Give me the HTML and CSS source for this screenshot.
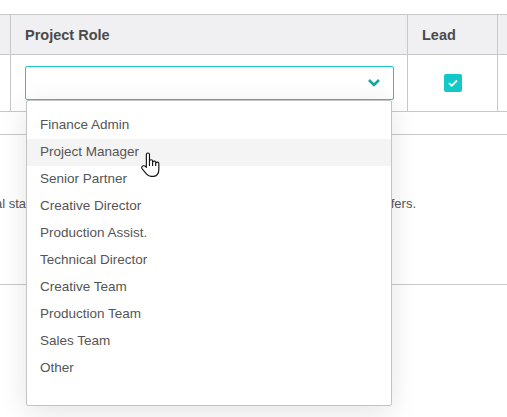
FILE: index.html
```html
<!DOCTYPE html>
<html lang="en">
<head>
    <meta charset="UTF-8">
    <meta name="viewport" content="width=device-width, initial-scale=1.0">
    <title>Project Role</title>
    <link rel="stylesheet" href="styles.css">
</head>
<body>
    <div class="page">
        <div class="team-table">
            <div class="cell head-cell edge"></div>
            <div class="cell head-cell">Project Role</div>
            <div class="cell head-cell">Lead</div>
            <div class="cell head-cell last"></div>

            <div class="cell body-cell edge"></div>
            <div class="cell body-cell role-cell">
                <div class="select-wrap">
                    <div class="select-box">
                        <svg class="select-arrow" viewBox="0 0 14 10">
                            <path d="M2 2l5 5 5-5"/>
                        </svg>
                    </div>

                    <ul class="select-menu">
                        <li class="select-option">Finance Admin</li>
                        <li class="select-option hover">Project Manager</li>
                        <li class="select-option">Senior Partner</li>
                        <li class="select-option">Creative Director</li>
                        <li class="select-option">Production Assist.</li>
                        <li class="select-option">Technical Director</li>
                        <li class="select-option">Creative Team</li>
                        <li class="select-option">Production Team</li>
                        <li class="select-option">Sales Team</li>
                        <li class="select-option">Other</li>
                    </ul>

                    <!-- mouse pointer over the hovered option -->
                    <svg class="hand-cursor" viewBox="0 0 19 25">
                        <path d="M6 13.5V2.5a1.5 1.5 0 0 1 3 0V9a1.5 1.5 0 0 1 3 0v1a1.5 1.5 0 0 1 3 .5v.5a1.5 1.5 0 0 1 3 .5V17c0 3.5-2 6.5-5 6.5h-2.5c-2 0-3.2-1-4.5-2.5L2 16.3c-.8-1-.5-2.3.5-2.8s2.1-.2 2.8.6l.7.7z"/>
                        <path d="M9 9v4.5M12 10v3.5M15 11v2.5"/>
                    </svg>
                </div>
            </div>
            <div class="cell body-cell lead-cell">
                <span class="checkbox">
                    <svg viewBox="0 0 18 18">
                        <path d="M5 9.2l2.7 2.6L13 6.5"/>
                    </svg>
                </span>
            </div>
            <div class="cell body-cell last"></div>

            <div class="cell spacer-row"></div>

            <div class="cell note-row">
                <div class="note">
                    <span class="note-start">Lead members get additional sta</span>
                    <span class="note-end">tus for all offers.</span>
                </div>
            </div>
        </div>
    </div>
</body>
</html>
```

FILE: styles.css
```css
* {
    box-sizing: border-box;
}

body {
    margin: 0;
    background-color: #fff;
    font-family: 'Liberation Sans', Arial, sans-serif;
    color: #555;
}

.page {
    width: 507px;
    height: 417px;
    overflow: hidden;
    padding-top: 14px;
}

.team-table {
    display: grid;
    grid-template-columns: 11px 397px 90px 1fr;
    border-top: 1px solid #c8c8c8;
}

.cell {
    border-right: 1px solid #c8c8c8;
    border-bottom: 1px solid #c8c8c8;
}

.cell.last {
    border-right: none;
}

.head-cell {
    height: 40px;
    padding: 0 14px;
    display: flex;
    align-items: center;
    background-color: #f0f0f2;
    font-size: 14.5px;
    font-weight: bold;
    color: #4a4a4a;
}

.head-cell.edge,
.head-cell.last {
    padding: 0;
}

.body-cell {
    height: 57px;
}

.role-cell {
    padding: 11px 0 0 14px;
}

.select-wrap {
    position: relative;
    width: 369px;
}

.select-box {
    height: 34px;
    border: 1px solid #1ccaca;
    border-radius: 2px;
    background-color: #fff;
    display: flex;
    align-items: center;
    justify-content: flex-end;
    padding-right: 12px;
}

.select-arrow {
    width: 14px;
    height: 10px;
    fill: none;
    stroke: #14a5a5;
    stroke-width: 2.6;
}

.select-menu {
    position: absolute;
    top: 34px;
    left: 1px;
    width: 366px;
    height: 306px;
    margin: 0;
    padding: 11px 0 0;
    list-style: none;
    background-color: #fff;
    border: 1px solid #c4c4c4;
    border-radius: 2px;
    box-shadow: 0 6px 28px rgba(0,0,0,0.11);
    z-index: 10;
}

.select-option {
    height: 27px;
    line-height: 25px;
    padding-left: 13px;
    font-size: 13.5px;
    color: #555;
}

.select-option.hover {
    background-color: #f4f4f4;
}

.hand-cursor {
    position: absolute;
    left: 115px;
    top: 86px;
    width: 20px;
    height: 26px;
    fill: #fff;
    stroke: #111;
    stroke-width: 1.1;
    stroke-linejoin: round;
    z-index: 11;
}

.lead-cell {
    display: flex;
    align-items: center;
    justify-content: center;
}

.checkbox {
    width: 18px;
    height: 18px;
    border-radius: 2px;
    background-color: #15c8c8;
    display: flex;
}

.checkbox svg {
    width: 18px;
    height: 18px;
    fill: none;
    stroke: #fff;
    stroke-width: 1.8;
}

.spacer-row {
    grid-column: 1 / -1;
    height: 23px;
    border-right: none;
}

.note-row {
    grid-column: 1 / -1;
    height: 150px;
    border-right: none;
    padding-top: 59px;
}

.note {
    display: flex;
    font-size: 13px;
    line-height: 20px;
    white-space: nowrap;
    color: #555;
}

.note-start {
    width: 26px;
    flex: none;
    display: flex;
    justify-content: flex-end;
    overflow: hidden;
}

.note-end {
    width: 390px;
    flex: none;
    text-align: right;
    overflow: hidden;
}
```
